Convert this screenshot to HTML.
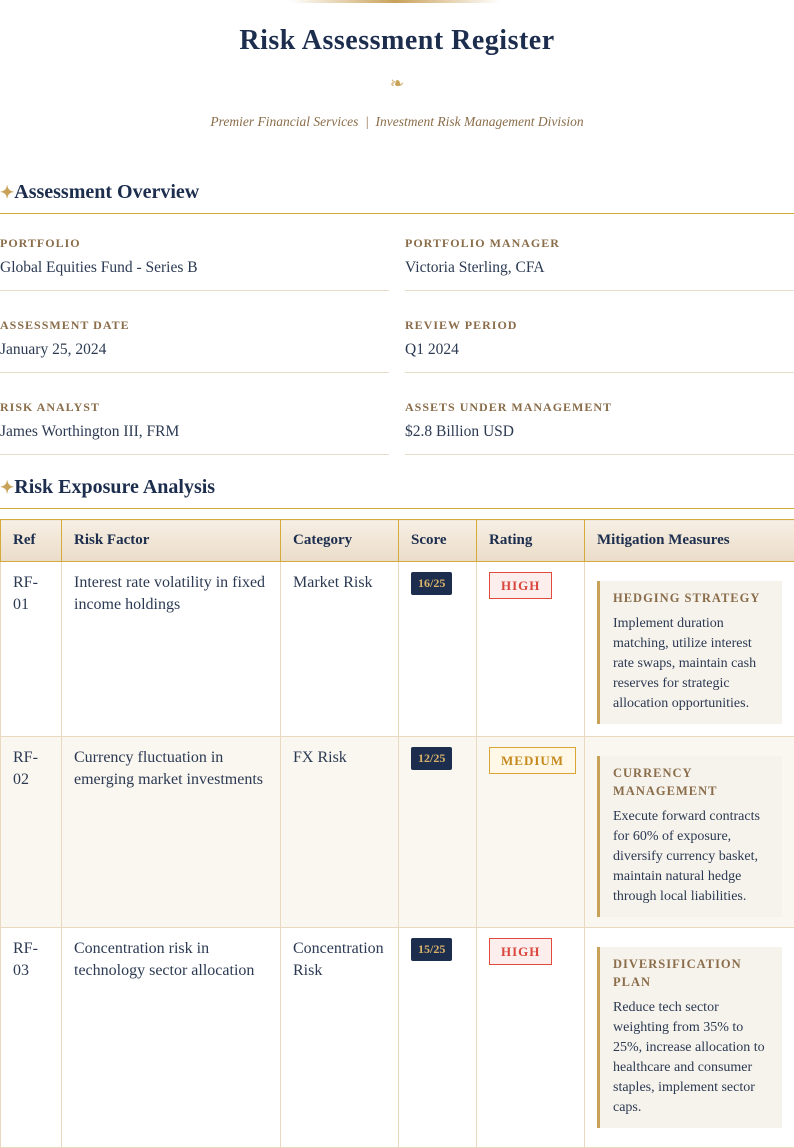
<!DOCTYPE html>
<html><head><meta charset="utf-8"><style>
*{box-sizing:border-box}
body{margin:0;width:794px;height:1123px;overflow:hidden;background:#fff;font-family:"Liberation Serif",serif;color:#2b3a52}
.bar{position:absolute;left:290px;top:0;width:210px;height:3px;background:linear-gradient(90deg,rgba(201,162,90,0),#c9a25a,rgba(201,162,90,0))}
h1{margin:0;position:absolute;top:25px;left:0;width:794px;text-align:center;font-size:28px;color:#1c2d4d;font-weight:bold;letter-spacing:0.5px}
.orn{position:absolute;top:74px;width:794px;text-align:center;color:#c9a25a;font-size:17px}
.sub{position:absolute;top:114px;width:794px;text-align:center;font-style:italic;color:#8a6d4a;font-size:13.5px}
h2{position:absolute;left:0;width:794px;margin:0;font-size:20px;color:#1c2d4d;font-weight:bold;border-bottom:1px solid #d4aa3a;padding-bottom:8px;line-height:24px}
h2 span{color:#c9a25a;font-size:17px}
.it{position:absolute;width:389px;border-bottom:1px solid #e6dcc9;height:67px}
.lab{font-size:12px;letter-spacing:1px;color:#8a6d4a;font-weight:bold;margin-top:12px}
.val{font-size:15.5px;color:#2b3a52;margin-top:8px}
table{position:absolute;left:0;top:519px;width:794px;border-collapse:collapse;font-size:16px;table-layout:fixed}
th{background:linear-gradient(#f6efe4,#ebdcc8);border:1px solid #d4aa3a;text-align:left;color:#1c2d4d;font-size:15px;height:42px;padding:0 12px}
td{border:1px solid #e8d9c0;vertical-align:top;padding:10px 12px;line-height:22px}
tr.alt td{background:#faf6f0}
.sc{display:inline-block;background:#1c2d4d;color:#d9b36a;font-size:12px;font-weight:bold;padding:0 7px;height:23px;line-height:23px;border-radius:2px}
.rt{display:inline-block;font-size:13px;font-weight:bold;letter-spacing:1px;padding:0 11px;height:27px;line-height:25px;border:1px solid}
.hi{color:#d9463b;border-color:#e14b3f;background:#fdeeee}
.md{color:#c58a1f;border-color:#d8a536;background:#fff8e6}
.mb{background:#f6f2ec;border-left:3px solid #c9a25a;padding:8px 10px 10px 13px;margin-top:9px;font-size:14px;line-height:20px;color:#2b3a52}
.mb b{display:block;color:#8a6d4a;font-size:12.5px;letter-spacing:1px;margin-bottom:7px;line-height:18px}
</style></head><body>
<div class="bar"></div>
<h1>Risk Assessment Register</h1>
<div class="orn">❧</div>
<div class="sub">Premier Financial Services &nbsp;|&nbsp; Investment Risk Management Division</div>
<h2 style="top:180px"><span>✦</span>Assessment Overview</h2>
<div class="it" style="left:0;top:224px"><div class="lab">PORTFOLIO</div><div class="val">Global Equities Fund - Series B</div></div>
<div class="it" style="left:405px;top:224px"><div class="lab">PORTFOLIO MANAGER</div><div class="val">Victoria Sterling, CFA</div></div>
<div class="it" style="left:0;top:306px"><div class="lab">ASSESSMENT DATE</div><div class="val">January 25, 2024</div></div>
<div class="it" style="left:405px;top:306px"><div class="lab">REVIEW PERIOD</div><div class="val">Q1 2024</div></div>
<div class="it" style="left:0;top:388px"><div class="lab">RISK ANALYST</div><div class="val">James Worthington III, FRM</div></div>
<div class="it" style="left:405px;top:388px"><div class="lab">ASSETS UNDER MANAGEMENT</div><div class="val">$2.8 Billion USD</div></div>
<h2 style="top:475px"><span>✦</span>Risk Exposure Analysis</h2>
<table>
<colgroup><col style="width:61px"><col style="width:219px"><col style="width:118px"><col style="width:78px"><col style="width:108px"><col style="width:210px"></colgroup>
<tr><th>Ref</th><th>Risk Factor</th><th>Category</th><th>Score</th><th>Rating</th><th>Mitigation Measures</th></tr>
<tr style="height:175px"><td>RF-<br>01</td><td>Interest rate volatility in fixed income holdings</td><td>Market Risk</td><td><span class="sc">16/25</span></td><td><span class="rt hi">HIGH</span></td><td><div class="mb"><b>HEDGING STRATEGY</b>Implement duration matching, utilize interest rate swaps, maintain cash reserves for strategic allocation opportunities.</div></td></tr>
<tr class="alt" style="height:191px"><td>RF-<br>02</td><td>Currency fluctuation in emerging market investments</td><td>FX Risk</td><td><span class="sc">12/25</span></td><td><span class="rt md">MEDIUM</span></td><td><div class="mb"><b>CURRENCY MANAGEMENT</b>Execute forward contracts for 60% of exposure, diversify currency basket, maintain natural hedge through local liabilities.</div></td></tr>
<tr style="height:220px"><td>RF-<br>03</td><td>Concentration risk in technology sector allocation</td><td>Concentration Risk</td><td><span class="sc">15/25</span></td><td><span class="rt hi">HIGH</span></td><td><div class="mb"><b>DIVERSIFICATION PLAN</b>Reduce tech sector weighting from 35% to 25%, increase allocation to healthcare and consumer staples, implement sector caps.</div></td></tr>
</table>
</body></html>
